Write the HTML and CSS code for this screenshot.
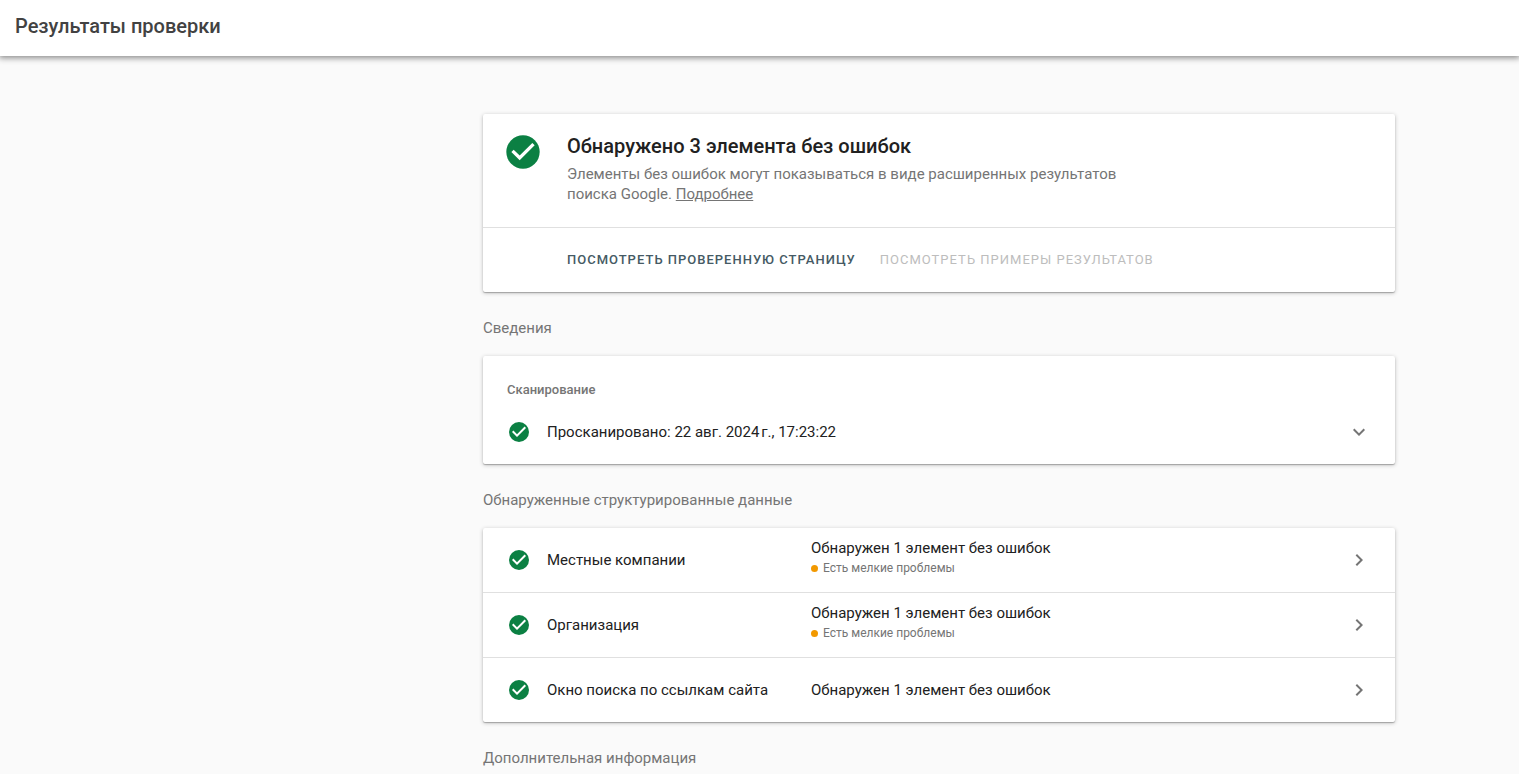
FILE: index.html
```html
<!DOCTYPE html>
<html lang="ru">
<head>
<meta charset="utf-8">
<meta name="viewport" content="width=device-width, initial-scale=1">
<title>Результаты проверки</title>
<link rel="stylesheet" href="styles.css">
</head>
<body>
<svg class="sprite" aria-hidden="true">
  <symbol id="check" viewBox="0 0 24 24"><circle cx="12" cy="12" r="10" fill="#0b8043"/><path d="M10 17l-5-5 1.41-1.41L10 14.17l7.59-7.59L19 8z" fill="#fff"/></symbol>
  <symbol id="down" viewBox="0 0 24 24"><path d="M7.41 8.59 12 13.17l4.59-4.58L18 10l-6 6-6-6z" fill="currentColor"/></symbol>
  <symbol id="right" viewBox="0 0 24 24"><path d="M8.59 16.59 13.17 12 8.59 7.41 10 6l6 6-6 6z" fill="currentColor"/></symbol>
</svg>
<header class="topbar"><h1 class="topbar-title">Результаты проверки</h1></header>
<main class="page">
  <div class="content">
    <section class="card">
      <div class="summary">
        <svg class="icon-large"><use href="#check"/></svg>
        <div class="summary-text">
          <h2 class="summary-title">Обнаружено 3 элемента без ошибок</h2>
          <p class="summary-note">Элементы без ошибок могут показываться в виде расширенных результатов поиска Google. <a class="more" href="#">Подробнее</a></p>
        </div>
      </div>
      <div class="actions">
        <button class="action" type="button">Посмотреть проверенную страницу</button>
        <button class="action" type="button" disabled>Посмотреть примеры результатов</button>
      </div>
    </section>

    <h2 class="section-title">Сведения</h2>
    <section class="card crawl">
      <h3 class="crawl-title">Сканирование</h3>
      <button class="row" type="button">
        <svg class="icon"><use href="#check"/></svg>
        <span class="crawl-text">Просканировано: 22 авг. 2024&#8239;г., 17:23:22</span>
        <svg class="icon chevron"><use href="#down"/></svg>
      </button>
    </section>

    <h2 class="section-title">Обнаруженные структурированные данные</h2>
    <section class="card list">
      <button class="row" type="button">
        <svg class="icon"><use href="#check"/></svg>
        <span class="name">Местные компании</span>
        <span class="result"><span>Обнаружен 1 элемент без ошибок</span><span class="warning">Есть мелкие проблемы</span></span>
        <svg class="icon chevron"><use href="#right"/></svg>
      </button>
      <button class="row" type="button">
        <svg class="icon"><use href="#check"/></svg>
        <span class="name">Организация</span>
        <span class="result"><span>Обнаружен 1 элемент без ошибок</span><span class="warning">Есть мелкие проблемы</span></span>
        <svg class="icon chevron"><use href="#right"/></svg>
      </button>
      <button class="row" type="button">
        <svg class="icon"><use href="#check"/></svg>
        <span class="name">Окно поиска по ссылкам сайта</span>
        <span class="result"><span>Обнаружен 1 элемент без ошибок</span></span>
        <svg class="icon chevron"><use href="#right"/></svg>
      </button>
    </section>

    <h2 class="section-title">Дополнительная информация</h2>
  </div>
</main>
</body>
</html>
```
FILE: styles.css
```css
* { box-sizing: border-box; }
body {
  margin: 0;
  background: #fafafa;
  color: #212121;
  font: 400 15px/20px Roboto, sans-serif;
}
h1, h2, h3, p { margin: 0; }
button {
  border: 0;
  background: none;
  color: inherit;
  font: inherit;
  text-align: left;
  cursor: pointer;
}
.sprite { display: none; }
.topbar {
  display: flex;
  align-items: center;
  height: 56px;
  padding: 0 15px 4px;
  background: #fff;
  box-shadow: 0 1px 6px 1px rgba(0, 0, 0, .45);
}
.topbar-title {
  color: #424242;
  font-size: 20px;
  font-weight: 500;
  line-height: 24px;
}
.page {
  display: grid;
  grid-template-columns: 483fr 912fr 124fr;
  padding-top: 58px;
}
.content { grid-column: 2; }
.card {
  border-radius: 2px;
  background: #fff;
  box-shadow: 0 1px 1px rgba(0, 0, 0, .24), 0 1px 4px rgba(0, 0, 0, .24);
}
.summary {
  display: flex;
  gap: 24px;
  padding: 18px 20px 23px;
}
.icon-large {
  flex: none;
  width: 40px;
  height: 40px;
}
.summary-text { max-width: 576px; }
.summary-title {
  margin-bottom: 4px;
  font-size: 20px;
  font-weight: 500;
  line-height: 28px;
}
.summary-note { color: #757575; }
.more { color: inherit; }
.actions {
  display: flex;
  flex-wrap: wrap;
  gap: 24px;
  padding: 22px 84px;
  border-top: 1px solid #e0e0e0;
}
.action {
  padding: 0;
  color: #455a64;
  font-size: 13px;
  font-weight: 500;
  letter-spacing: 1px;
  text-transform: uppercase;
}
.action:disabled {
  color: #bdbdbd;
  font-weight: 400;
}
.section-title {
  margin: 24px 0 16px;
  color: #757575;
  font-size: 15px;
  font-weight: 400;
  line-height: 24px;
}
.section-title:last-child { margin-bottom: 0; }
.crawl { padding-top: 24px; }
.crawl-title {
  padding: 0 24px;
  color: #757575;
  font-size: 13px;
  font-weight: 500;
}
.row {
  display: flex;
  align-items: center;
  width: 100%;
  height: 64px;
  padding: 0 24px;
}
.list .row + .row {
  height: 65px;
  border-top: 1px solid #e0e0e0;
}
.icon {
  flex: none;
  width: 24px;
  height: 24px;
}
.chevron {
  color: #757575;
}
.crawl-text { flex: 1; margin-left: 16px; }
.name { flex: none; width: 264px; margin-left: 16px; }
.result {
  display: flex;
  flex: 1;
  flex-direction: column;
}
.warning {
  display: flex;
  align-items: center;
  gap: 5px;
  margin-bottom: 4px;
  color: #757575;
  font-size: 12px;
}
.warning::before {
  width: 7px;
  height: 7px;
  border-radius: 50%;
  background: #f29900;
  content: "";
}
```
